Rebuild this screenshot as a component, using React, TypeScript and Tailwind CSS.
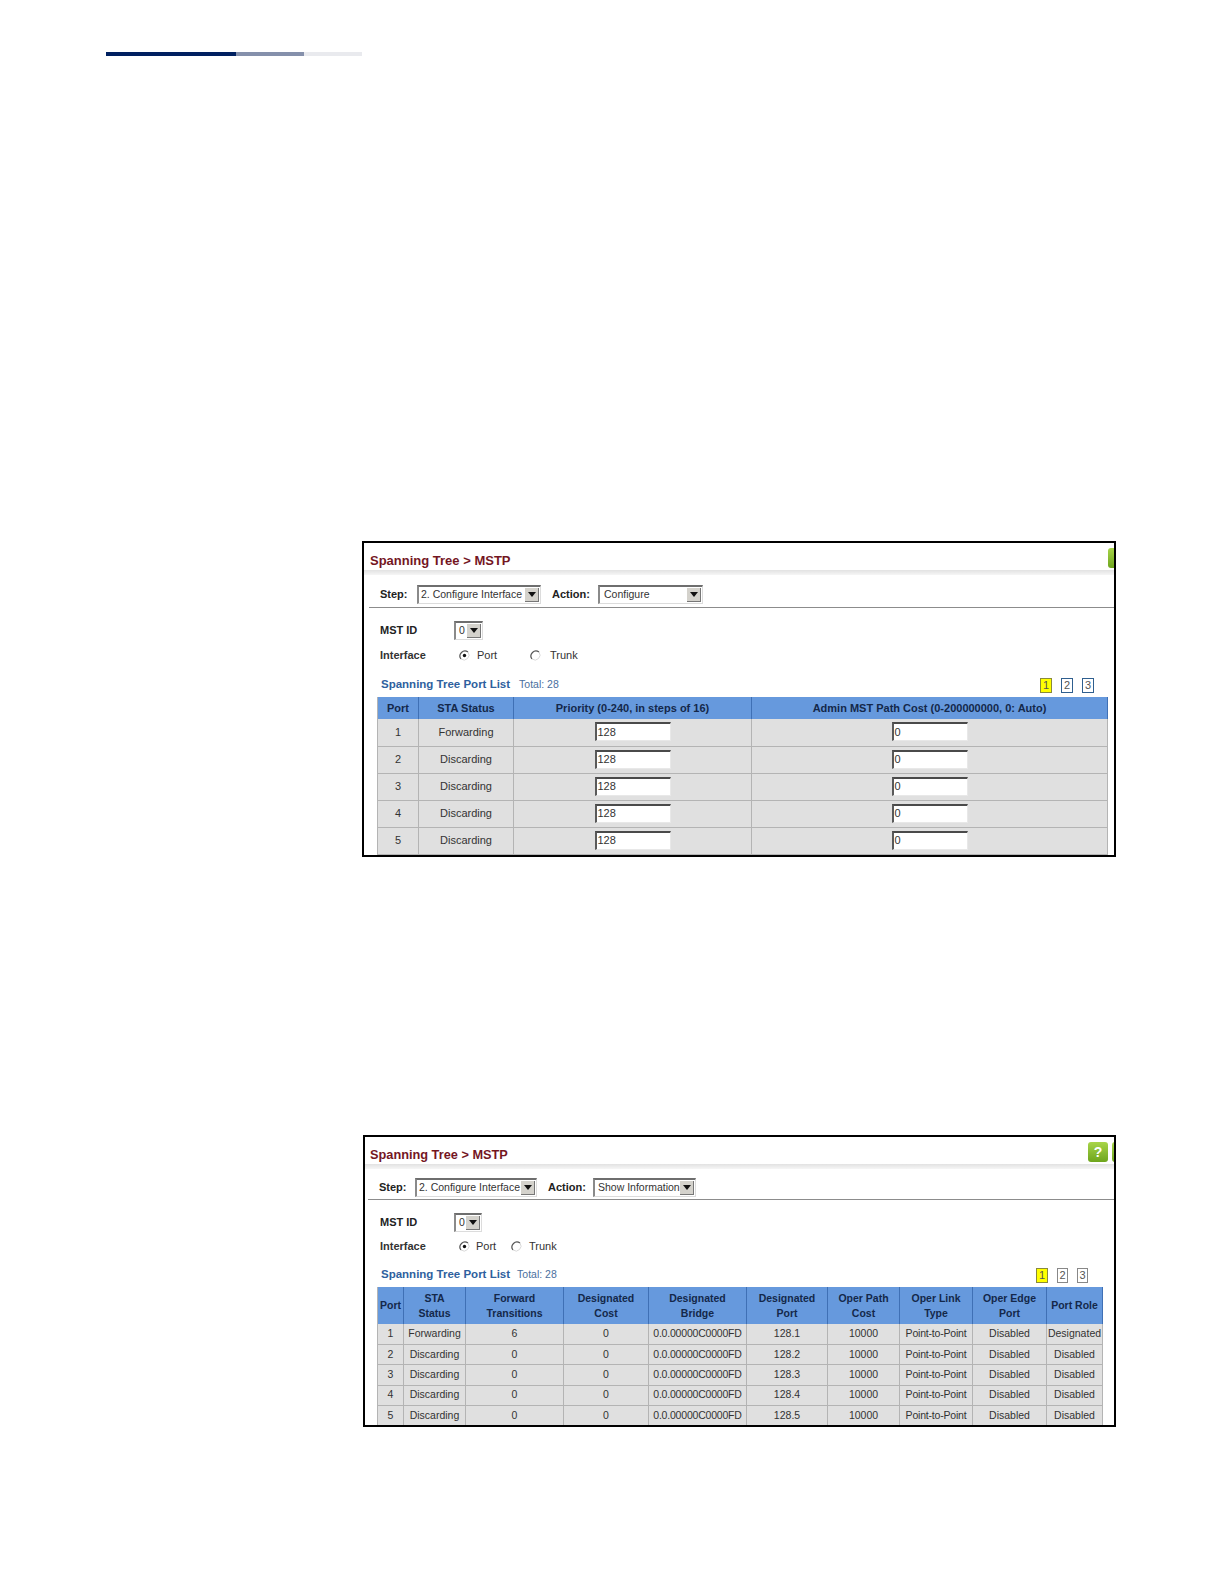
import type { ReactNode } from "react";

const Select = ({ text, className }: { text: string; className: string }) => (
    <div className={`flex items-center justify-between bg-white border-t-2 border-l-2 border-t-[#6e6e6e] border-l-[#8a8a8a] border-r border-b border-r-[#dcdcdc] border-b-[#dcdcdc] pl-[2px] pr-[1px] text-[10.5px] font-normal text-[#333] ${className}`}>
        <span className="whitespace-nowrap">{text}</span>
        <span className="flex items-center justify-center w-[14px] h-[14px] shrink-0 bg-[#d4d2cc] border-r border-b border-[#777]">
            <svg width="8" height="5" viewBox="0 0 8 5"><path d="M0 0h8L4 5z" fill="#111"/></svg>
        </span>
    </div>
);

const Radio = ({ checked }: { checked?: boolean }) => (
    <svg width="11" height="11" viewBox="0 0 11 11" className="shrink-0">
        <circle cx="5.5" cy="5.5" r="5" fill="#fff"/>
        <path d="M9 2A5 5 0 0 0 2 9" fill="none" stroke="#555" strokeWidth="1.2"/>
        <path d="M9 2A5 5 0 0 1 2 9" fill="none" stroke="#d8d8d8" strokeWidth="1"/>
        {checked && <circle cx="5.5" cy="5.5" r="1.7" fill="#111"/>}
    </svg>
);

const Page = ({ n, active, className }: { n: number; active?: boolean; className: string }) => (
    <span className={`flex items-center justify-center text-[11px] border ${active ? "bg-[#ffff00] border-[#8a8a3a] text-[#555]" : "bg-white text-[#555]"} ${className}`}>{n}</span>
);

const Help = ({ mark }: { mark?: boolean }) => (
    <span className="flex items-center justify-center w-[20px] h-[20px] shrink-0 rounded-[3px] bg-gradient-to-b from-[#a8d548] to-[#6ea51c] text-white text-[14px] font-bold">
        {mark && "?"}
    </span>
);

const TextBox = ({ value }: { value: string }) => (
    <div className="flex items-center w-[76px] h-[19px] -mt-px bg-white border-t-2 border-l-2 border-t-[#4a4a4a] border-l-[#5a5a5a] border-r border-b border-r-[#e8e8e8] border-b-[#e8e8e8] pl-[1px] text-[11px] text-[#333]">{value}</div>
);

const Shell = ({ className, children }: { className: string; children: ReactNode }) => (
    <section className={`overflow-hidden border-2 border-black bg-white ${className}`}>{children}</section>
);

const Shadow = () => <div className="h-[5px] bg-gradient-to-b from-[#e2e2e2] to-[#f6f6f6]"/>;

const configRows = ["Forwarding", "Discarding", "Discarding", "Discarding", "Discarding"];

const infoRows = [
    ["Forwarding", "6", "128.1", "Designated"],
    ["Discarding", "0", "128.2", "Disabled"],
    ["Discarding", "0", "128.3", "Disabled"],
    ["Discarding", "0", "128.4", "Disabled"],
    ["Discarding", "0", "128.5", "Disabled"],
];

const thCls = "bg-[#6699dd] border-r border-[#3f70b5] text-[#14284a] font-bold text-center p-0";
const tdCls = "border-r border-b border-[#b4b4b4] text-center p-0 text-[#333] whitespace-nowrap";

const ConfigPanel = () => (
    <Shell className="w-[754px] h-[316px] ml-[362px] mt-[485px]">
        <div className="flex items-start h-[27px] pl-[6px]">
            <h2 className="text-[13px] font-bold text-[#74161f] mt-[8px]">Spanning Tree &gt; MSTP</h2>
            <div className="ml-auto -mr-[14px] mt-[5px]"><Help/></div>
        </div>
        <Shadow/>
        <div className="flex items-center h-[18px] mt-[10px] ml-[16px] text-[11px] font-bold text-[#222]">
            <span className="w-[37px]">Step:</span>
            <Select text="2. Configure Interface" className="w-[124px] h-[19px]"/>
            <span className="ml-[11px] w-[46px]">Action:</span>
            <Select text="Configure" className="w-[105px] h-[19px] pl-[4px]"/>
        </div>
        <div className="h-px mt-[4px] ml-[5px] bg-[#8c8c8c]"/>
        <div className="flex items-center h-[19px] mt-[13px] ml-[16px] text-[11px] font-bold text-[#222]">
            <span className="w-[74px]">MST ID</span>
            <Select text="0" className="w-[29px] h-[19px] pl-[3px]"/>
        </div>
        <div className="flex items-center h-[14px] mt-[8px] ml-[16px] text-[11px] text-[#333]">
            <span className="w-[79px] font-bold">Interface</span>
            <Radio checked/>
            <span className="ml-[7px] w-[53px]">Port</span>
            <Radio/>
            <span className="ml-[9px]">Trunk</span>
        </div>
        <div className="flex items-center h-[16px] mt-[15px] ml-[17px] pr-[20px]">
            <h3 className="text-[11.5px] font-bold text-[#2f5f9e]">Spanning Tree Port List</h3>
            <span className="ml-[9px] text-[10.5px] text-[#4a6f9e]">Total: 28</span>
            <div className="ml-auto flex gap-[9px]">
                <Page n={1} active className="w-[12px] h-[15px]"/>
                <Page n={2} className="w-[12px] h-[15px] border-[#2f5f8f]"/>
                <Page n={3} className="w-[12px] h-[15px] border-[#2f5f8f]"/>
            </div>
        </div>
        <table className="table-fixed border-collapse w-[731px] ml-[13px] mt-[4px] text-[11px] bg-[#e0e0e0] border-l border-[#b4b4b4]">
            <thead>
                <tr className="h-[22px]">
                    <th className={`${thCls} w-[41px]`}>Port</th>
                    <th className={`${thCls} w-[95px]`}>STA Status</th>
                    <th className={`${thCls} w-[238px]`}>Priority (0-240, in steps of 16)</th>
                    <th className={thCls}>Admin MST Path Cost (0-200000000, 0: Auto)</th>
                </tr>
            </thead>
            <tbody>
                {configRows.map((status, i) => (
                    <tr key={i} className="h-[27px]">
                        <td className={tdCls}>{i + 1}</td>
                        <td className={tdCls}>{status}</td>
                        <td className={tdCls}><div className="flex justify-center"><TextBox value="128"/></div></td>
                        <td className={tdCls}><div className="flex justify-center"><TextBox value="0"/></div></td>
                    </tr>
                ))}
                <tr className="h-[4px]"><td className={tdCls}/><td className={tdCls}/><td className={tdCls}/><td className={tdCls}/></tr>
            </tbody>
        </table>
    </Shell>
);

const InfoPanel = () => (
    <Shell className="w-[753px] h-[292px] ml-[363px] mt-[278px]">
        <div className="flex items-start h-[27px] pl-[5px]">
            <h2 className="text-[12.75px] font-bold text-[#74161f] mt-[8px]">Spanning Tree &gt; MSTP</h2>
            <div className="ml-auto flex gap-[4px] -mr-[18px] mt-[5px]"><Help mark/><Help/></div>
        </div>
        <Shadow/>
        <div className="flex items-center h-[18px] mt-[9px] ml-[14px] text-[11px] font-bold text-[#222]">
            <span className="w-[36px]">Step:</span>
            <Select text="2. Configure Interface" className="w-[122px] h-[19px]"/>
            <span className="ml-[11px] w-[45px]">Action:</span>
            <Select text="Show Information" className="w-[103px] h-[19px] pl-[3px]"/>
        </div>
        <div className="h-px mt-[3px] ml-[3px] bg-[#8c8c8c]"/>
        <div className="flex items-center h-[18px] mt-[13px] ml-[15px] text-[11px] font-bold text-[#222]">
            <span className="w-[74px]">MST ID</span>
            <Select text="0" className="w-[28px] h-[19px] pl-[3px]"/>
        </div>
        <div className="flex items-center h-[14px] mt-[8px] ml-[15px] text-[11px] text-[#333]">
            <span className="w-[79px] font-bold">Interface</span>
            <Radio checked/>
            <span className="ml-[6px] w-[35px]">Port</span>
            <Radio/>
            <span className="ml-[7px]">Trunk</span>
        </div>
        <div className="flex items-center h-[16px] mt-[14px] ml-[16px] pr-[26px]">
            <h3 className="text-[11.5px] font-bold text-[#2f5f9e]">Spanning Tree Port List</h3>
            <span className="ml-[7px] text-[10.5px] text-[#4a6f9e]">Total: 28</span>
            <div className="ml-auto flex gap-[9px]">
                <Page n={1} active className="w-[12px] h-[15px]"/>
                <Page n={2} className="w-[11px] h-[15px] border-[#888]"/>
                <Page n={3} className="w-[11px] h-[15px] border-[#888]"/>
            </div>
        </div>
        <table className="table-fixed border-collapse w-[726px] ml-[12px] mt-[4px] text-[10.5px] bg-[#e0e0e0] border-l border-[#b4b4b4]">
            <thead>
                <tr className="h-[37px] leading-[15px]">
                    <th className={`${thCls} w-[26px]`}>Port</th>
                    <th className={`${thCls} w-[62px]`}>STA<br/>Status</th>
                    <th className={`${thCls} w-[98px]`}>Forward<br/>Transitions</th>
                    <th className={`${thCls} w-[85px]`}>Designated<br/>Cost</th>
                    <th className={`${thCls} w-[98px]`}>Designated<br/>Bridge</th>
                    <th className={`${thCls} w-[81px]`}>Designated<br/>Port</th>
                    <th className={`${thCls} w-[72px]`}>Oper Path<br/>Cost</th>
                    <th className={`${thCls} w-[73px]`}>Oper Link<br/>Type</th>
                    <th className={`${thCls} w-[74px]`}>Oper Edge<br/>Port</th>
                    <th className={thCls}>Port Role</th>
                </tr>
            </thead>
            <tbody>
                {infoRows.map(([status, fwd, port, role], i) => (
                    <tr key={i} className="h-[20.4px]">
                        <td className={tdCls}>{i + 1}</td>
                        <td className={tdCls}>{status}</td>
                        <td className={tdCls}>{fwd}</td>
                        <td className={tdCls}>0</td>
                        <td className={`${tdCls} tracking-[-0.2px]`}>0.0.00000C0000FD</td>
                        <td className={tdCls}>{port}</td>
                        <td className={tdCls}>10000</td>
                        <td className={`${tdCls} tracking-[-0.2px]`}>Point-to-Point</td>
                        <td className={tdCls}>Disabled</td>
                        <td className={tdCls}>{role}</td>
                    </tr>
                ))}
            </tbody>
        </table>
    </Shell>
);

export default function App() {
    return (
        <div className="min-h-[1584px] bg-white pt-[52px] font-['Liberation_Sans',Arial,sans-serif]">
            <div className="flex h-[4px] ml-[106px] w-[256px]">
                <div className="w-[130px] bg-[#002060]"/>
                <div className="w-[68px] bg-[#8590ab]"/>
                <div className="w-[58px] bg-[#e9eaee]"/>
            </div>
            <ConfigPanel/>
            <InfoPanel/>
        </div>
    );
}
